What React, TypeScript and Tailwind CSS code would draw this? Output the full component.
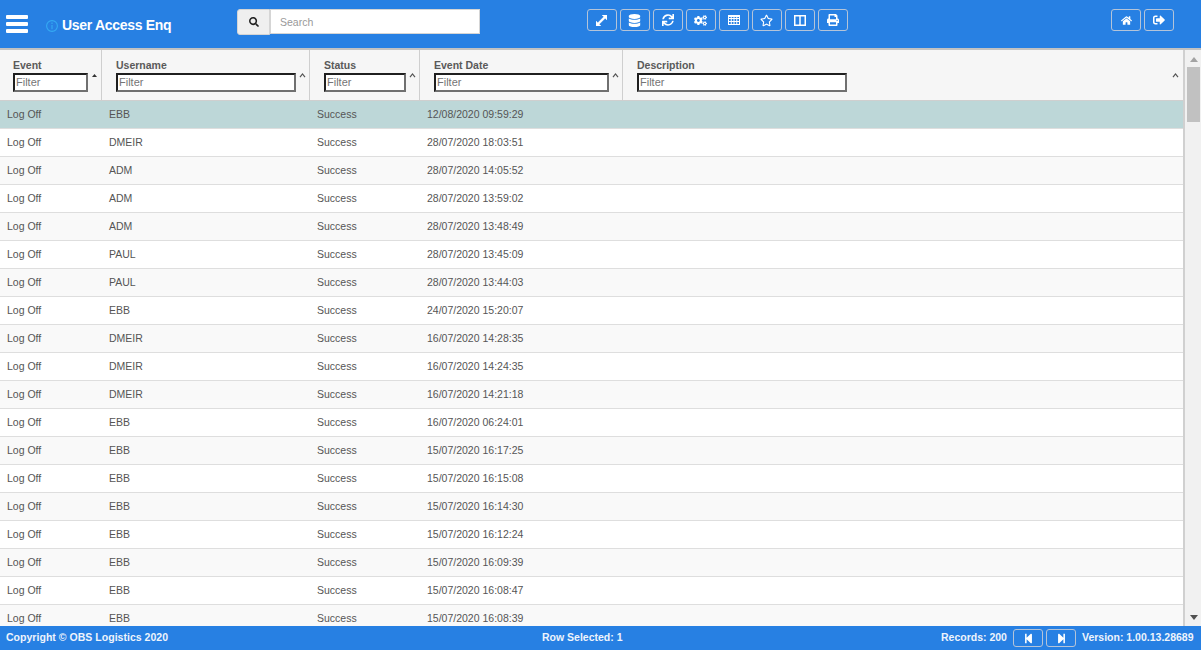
import React from "react";
import { FaDatabase, FaSync, FaCogs, FaRegStar, FaPrint, FaHome, FaSignOutAlt, FaSearch, FaStepBackward, FaStepForward } from "react-icons/fa";

const rows: [string, string][] = [
  ["EBB", "12/08/2020 09:59:29"],
  ["DMEIR", "28/07/2020 18:03:51"],
  ["ADM", "28/07/2020 14:05:52"],
  ["ADM", "28/07/2020 13:59:02"],
  ["ADM", "28/07/2020 13:48:49"],
  ["PAUL", "28/07/2020 13:45:09"],
  ["PAUL", "28/07/2020 13:44:03"],
  ["EBB", "24/07/2020 15:20:07"],
  ["DMEIR", "16/07/2020 14:28:35"],
  ["DMEIR", "16/07/2020 14:24:35"],
  ["DMEIR", "16/07/2020 14:21:18"],
  ["EBB", "16/07/2020 06:24:01"],
  ["EBB", "15/07/2020 16:17:25"],
  ["EBB", "15/07/2020 16:15:08"],
  ["EBB", "15/07/2020 16:14:30"],
  ["EBB", "15/07/2020 16:12:24"],
  ["EBB", "15/07/2020 16:09:39"],
  ["EBB", "15/07/2020 16:08:47"],
  ["EBB", "15/07/2020 16:08:39"],
];

function ExpandIcon() {
  return (
    <svg width="11" height="11" viewBox="0 0 11 11" fill="white" stroke="white" strokeWidth="0.4">
      <path d="M11 0v5L9.2 3.2 3.2 9.2 5 11H0V6l1.8 1.8 6-6L6 0z" />
    </svg>
  );
}

function TableIcon() {
  return (
    <svg width="12" height="10" viewBox="0 0 12 10" fill="none" stroke="white" strokeWidth="1">
      <rect x="0.5" y="0.5" width="11" height="9" />
      <path d="M3.25 0v10M6 0v10M8.75 0v10M0 3.5h12M0 6.5h12" />
      <path d="M0 1.2h12" strokeWidth="1.6" />
    </svg>
  );
}

function ColumnsIcon() {
  return (
    <svg width="12" height="11" viewBox="0 0 12 11" fill="none" stroke="white" strokeWidth="1.5">
      <rect x="0.75" y="0.75" width="10.5" height="9.5" />
      <path d="M6 0v11" />
    </svg>
  );
}

function Caret({ solid, right }: { solid?: boolean; right: string }) {
  return solid ? (
    <svg className={`absolute top-[24px] ${right}`} width="5" height="3" viewBox="0 0 5 3">
      <path d="M2.5 0L5 3H0z" fill="#333" />
    </svg>
  ) : (
    <svg className={`absolute top-[23px] ${right}`} width="7" height="5" viewBox="0 0 7 5" fill="none" stroke="#555" strokeWidth="1.2">
      <path d="M1 4.2L3.5 1 6 4.2" />
    </svg>
  );
}

function Btn({ children, h = "h-[22px]", w = "w-[30px]" }: { children: React.ReactNode; h?: string; w?: string }) {
  return (
    <button className={`${w} ${h} flex items-center justify-center rounded-[3px] border border-[#b4c4d9] bg-transparent text-white`}>
      {children}
    </button>
  );
}

const inputCls =
  "mt-[2px] block h-[19px] border-2 border-t-[#1f1f1f] border-l-[#1f1f1f] border-r-[#707070] border-b-[#707070] bg-white pb-[2px] text-[11px] outline-none placeholder:text-[#757575]";

function HeadCell({ label, input, cls, solid, caret = "right-[3px]" }: { label: string; input: string; cls: string; solid?: boolean; caret?: string }) {
  return (
    <div className={`${cls} relative h-full border-r border-[#cfcfcf] pt-[9px]`}>
      <div className="text-[10.5px] leading-[12px] font-bold text-[#5a5a5a]">{label}</div>
      <input placeholder="Filter" className={`${input} ${inputCls}`} />
      <Caret solid={solid} right={caret} />
    </div>
  );
}

export default function App() {
  return (
    <div className="flex h-[650px] w-[1201px] flex-col overflow-hidden bg-white font-['Liberation_Sans',Arial,sans-serif]">
      {/* Top bar */}
      <header className="flex h-[48px] shrink-0 items-start bg-[#2780e3]">
        <div className="ml-[6px] mt-[15px] flex w-[22px] flex-col gap-[3.5px]">
          <span className="h-[3.5px] rounded-[1px] bg-white" />
          <span className="h-[3.5px] rounded-[1px] bg-white" />
          <span className="h-[3.5px] rounded-[1px] bg-white" />
        </div>
        <svg className="ml-[18px] mt-[20px]" width="12" height="12" viewBox="0 0 12 12" fill="none" stroke="#35aaf3" strokeWidth="1.1">
          <circle cx="6" cy="6" r="5.4" />
          <path d="M6 5v4.2M6 2.6v1.3" />
        </svg>
        <div className="ml-[4px] mt-[17px] w-[175px] text-[14px] leading-[17px] font-bold tracking-[-0.3px] whitespace-nowrap text-white">User Access Enq</div>
        <div className="mt-[9px] flex">
          <div className="flex h-[26px] w-[33px] items-center justify-center rounded-l-[3px] border border-[#d5d5d5] bg-[#efefef] text-[#222]">
            <FaSearch size={10} />
          </div>
          <input
            placeholder="Search"
            className="h-[25px] w-[210px] border border-[#d5d5d5] bg-white px-[9px] text-[10.5px] outline-none placeholder:text-[#999]"
          />
        </div>
        <div className="ml-[107px] mt-[9px] flex gap-[3.5px]">
          <Btn w="w-[29.5px]"><ExpandIcon /></Btn>
          <Btn w="w-[29.5px]"><FaDatabase size={13} /></Btn>
          <Btn w="w-[29.5px]"><FaSync size={12} /></Btn>
          <Btn w="w-[29.5px]"><FaCogs size={13} /></Btn>
          <Btn w="w-[29.5px]"><TableIcon /></Btn>
          <Btn w="w-[29.5px]"><FaRegStar size={13} /></Btn>
          <Btn w="w-[29.5px]"><ColumnsIcon /></Btn>
          <Btn w="w-[29.5px]"><FaPrint size={12} /></Btn>
        </div>
        <div className="ml-[263.5px] mt-[9px] flex gap-[3px]">
          <Btn><FaHome size={11} /></Btn>
          <Btn><FaSignOutAlt size={12} /></Btn>
        </div>
      </header>

      {/* Body */}
      <div className="flex min-h-0 flex-1 border-t-2 border-[#c2c2c2]">
        <div className="w-[1185px] shrink-0 overflow-hidden border-r-2 border-[#d0d0d0]">
          <div className="flex h-[51px] border-b border-[#cfcfcf] bg-[#f6f6f6]">
            <HeadCell label="Event" input="w-[75px] pl-[1px]" cls="w-[102px] pl-[13px]" solid caret="right-[4px]" />
            <HeadCell label="Username" input="w-[180px] pl-[1px]" cls="w-[208px] pl-[14px]" />
            <HeadCell label="Status" input="w-[82px] pl-[1px]" cls="w-[110px] pl-[14px]" />
            <HeadCell label="Event Date" input="w-[175px] pl-[1px]" cls="w-[203px] pl-[14px]" />
            <div className="relative flex-1 pl-[14px] pt-[9px]">
              <div className="text-[10.5px] leading-[12px] font-bold text-[#5a5a5a]">Description</div>
              <input placeholder="Filter" className={`w-[210px] pl-[1px] ${inputCls}`} />
              <Caret right="right-[4px]" />
            </div>
          </div>
          {rows.map(([user, date], i) => (
            <div
              key={i}
              className={`flex h-[28px] items-center border-b border-[#dedede] text-[10.5px] text-[#555] ${
                i === 0 ? "bg-[#bdd7d8]" : i % 2 === 0 ? "bg-[#f9f9f9]" : "bg-white"
              }`}
            >
              <div className="w-[102px] pl-[7px]">Log Off</div>
              <div className="w-[208px] pl-[7px]">{user}</div>
              <div className="w-[110px] pl-[7px]">Success</div>
              <div className="w-[203px] pl-[7px]">{date}</div>
            </div>
          ))}
        </div>
        <div className="flex w-[16px] shrink-0 flex-col items-center bg-[#f1f1f1] pl-[1px]">
          <svg className="mt-[7px] shrink-0" width="8" height="5" viewBox="0 0 8 5"><path d="M4 0l4 5H0z" fill="#a3a3a3" /></svg>
          <div className="mt-[5px] h-[55px] w-[13px] bg-[#c1c1c1]" />
          <div className="flex-1" />
          <svg className="mb-[6px] shrink-0" width="8" height="5" viewBox="0 0 8 5"><path d="M4 5L8 0H0z" fill="#505050" /></svg>
        </div>
      </div>

      {/* Footer */}
      <footer className="flex h-[24px] shrink-0 items-center bg-[#2780e3] pl-[6px] text-[10.5px] font-bold whitespace-nowrap text-[#eef4fc]">
        <div className="w-[536px] tracking-[0.03px]">Copyright © OBS Logistics 2020</div>
        <div className="w-[399px]">Row Selected: 1</div>
        <div className="w-[72px]">Records: 200</div>
        <div className="flex gap-[3px]">
          <Btn h="h-[18px]"><FaStepBackward size={11} /></Btn>
          <Btn h="h-[18px]"><FaStepForward size={11} /></Btn>
        </div>
        <div className="ml-[6px]">Version: 1.00.13.28689</div>
      </footer>
    </div>
  );
}
